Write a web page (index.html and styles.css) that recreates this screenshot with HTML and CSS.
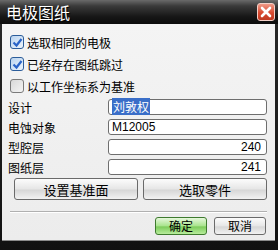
FILE: index.html
```html
<!DOCTYPE html>
<html lang="zh-CN">
<head>
    <meta charset="UTF-8">
    <title>电极图纸</title>
    <link rel="stylesheet" href="styles.css">
</head>
<body>
    <div class="window">
        <div class="titlebar">
            <span class="title">电极图纸</span>
            <span class="close">
                <svg width="12" height="12" viewBox="0 0 12 12"><path d="M2 2 L10 10 M10 2 L2 10" stroke="#fff" stroke-width="2.6" stroke-linecap="round"/></svg>
            </span>
        </div>
        <div class="content">
            <div class="check-row">
                <span class="box checked"><svg width="11" height="11" viewBox="0 0 11 11"><path d="M1.5 5.5 L4.5 8.5 L9.5 2" fill="none" stroke="#2a64c8" stroke-width="2.2"/></svg></span>
                <span>选取相同的电极</span>
            </div>
            <div class="check-row">
                <span class="box checked"><svg width="11" height="11" viewBox="0 0 11 11"><path d="M1.5 5.5 L4.5 8.5 L9.5 2" fill="none" stroke="#2a64c8" stroke-width="2.2"/></svg></span>
                <span>已经存在图纸跳过</span>
            </div>
            <div class="check-row">
                <span class="box"></span>
                <span>以工作坐标系为基准</span>
            </div>

            <div class="fields">
                <label>设计</label>
                <div class="field"><span class="selected">刘敦权</span></div>
                <label>电蚀对象</label>
                <div class="field">M12005</div>
                <label>型腔层</label>
                <div class="field num">240</div>
                <label>图纸层</label>
                <div class="field num">241</div>
            </div>

            <div class="actions">
                <button class="btn wide">设置基准面</button>
                <button class="btn wide">选取零件</button>
            </div>

            <div class="separator"></div>

            <div class="footer">
                <button class="btn small ok">确定</button>
                <button class="btn small">取消</button>
            </div>
        </div>
    </div>
</body>
</html>
```

FILE: styles.css
```css
body {
    margin: 0;
    font-family: "Noto Sans CJK SC", "Liberation Sans", sans-serif;
    font-size: 12px;
    color: #000;
    background: #fff;
}

.window {
    width: 278px;
    height: 250px;
    box-sizing: border-box;
    background: linear-gradient(#2a2a2a, #111);
    padding: 0 3px 9px 2px;
    display: flex;
    flex-direction: column;
}

.titlebar {
    height: 24px;
    flex: none;
    display: flex;
    align-items: center;
    justify-content: space-between;
    padding: 0 3px 0 6px;
    background: linear-gradient(#6a6a6a 0%, #3a3a3a 25%, #161616 70%, #0c0c0c 100%);
    margin: 0 -3px 0 -2px;
}

.title {
    color: #fff;
    font-size: 16px;
    line-height: 18px;
    text-shadow: 1px 1px 1px #000;
}

.close {
    width: 18px;
    height: 18px;
    box-sizing: border-box;
    border: 1px solid #f3d0c8;
    border-radius: 3px;
    background: linear-gradient(#f09a88, #d84a30 55%, #c03a22);
    display: flex;
    align-items: center;
    justify-content: center;
}

.content {
    flex: 1;
    background: linear-gradient(#f4f4f4, #ececec);
    border-bottom: 1px solid #8a8a8a;
    padding: 7px 0 0 6px;
}

.check-row {
    height: 22px;
    display: flex;
    align-items: center;
    gap: 3px;
    padding-left: 2px;
}

.box {
    width: 14px;
    height: 14px;
    box-sizing: border-box;
    border: 1px solid #7a7a7a;
    border-radius: 3px;
    background: linear-gradient(135deg, #d8d8d8, #f4f4f4);
    display: flex;
    align-items: center;
    justify-content: center;
}

.box.checked {
    border-color: #2c5d9a;
    background: linear-gradient(135deg, #b9d3ef, #eef5fc);
}

.fields {
    display: grid;
    grid-template-columns: 100px 159px;
    grid-auto-rows: 20px;
    align-items: center;
}

.field {
    height: 16px;
    box-sizing: border-box;
    border: 1px solid #6e6e6e;
    border-radius: 3px;
    background: #fff;
    padding: 0 3px;
    font-family: "Liberation Sans", "Noto Sans CJK SC", sans-serif;
    font-size: 12px;
    line-height: 14px;
}

.field.num {
    text-align: right;
    padding-right: 5px;
}

.selected {
    background: #3a6ec8;
    color: #fff;
    font-family: "Noto Sans CJK SC", sans-serif;
    padding: 0 1px;
}

.actions {
    display: flex;
    gap: 5px;
    padding: 1px 0 0 6px;
}

.btn {
    font-family: "Noto Sans CJK SC", sans-serif;
    font-size: 12px;
    color: #000;
    border: 1px solid #6a6a6a;
    border-radius: 3px;
    background: linear-gradient(#fcfcfc, #e6e6e6 50%, #d6d6d6 55%, #f2f2f2);
    padding: 0;
}

.btn.wide {
    width: 124px;
    height: 22px;
    font-size: 13px;
}

.separator {
    height: 0;
    border-top: 1px solid #b0b0b0;
    border-bottom: 1px solid #fff;
    margin: 11px 8px 4px 2px;
}

.footer {
    display: flex;
    justify-content: flex-end;
    gap: 7px;
    padding-right: 9px;
}

.btn.small {
    width: 52px;
    height: 18px;
    line-height: 14px;
}

.btn.ok {
    border-color: #3e7a2e;
    background: linear-gradient(#e6f8dc, #a8e48c 50%, #7ccc5a 55%, #b8ec9c);
}
```
